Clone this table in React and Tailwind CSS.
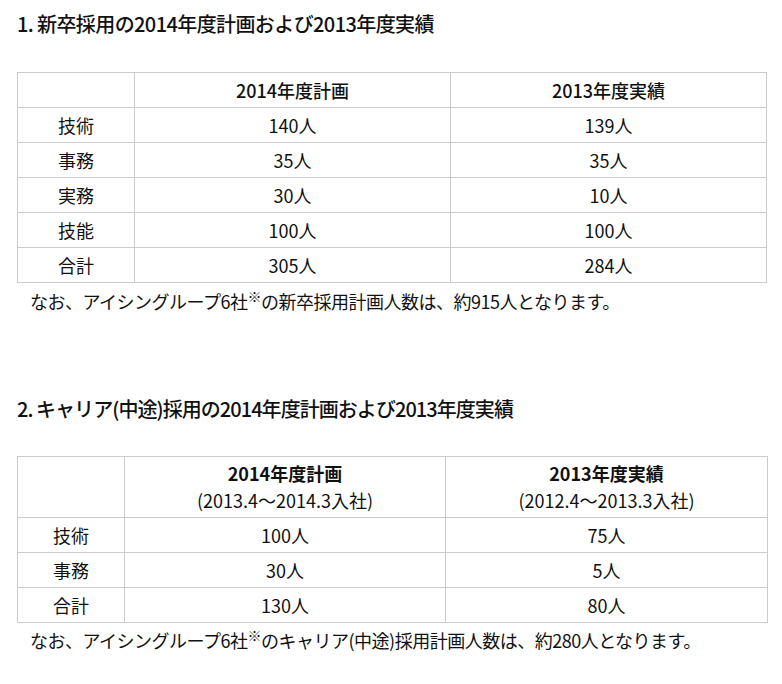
import React from "react";

const font = { fontFamily: '"Noto Sans CJK JP", "Noto Sans", sans-serif' };

function Table1() {
  const rows = [
    ["技術", "140人", "139人"],
    ["事務", "35人", "35人"],
    ["実務", "30人", "10人"],
    ["技能", "100人", "100人"],
    ["合計", "305人", "284人"],
  ];
  return (
    <table className="mt-[34px] w-[749px] border-collapse table-fixed text-[18px] text-[#111]">
      <colgroup>
        <col className="w-[117px]" />
        <col className="w-[316px]" />
        <col className="w-[316px]" />
      </colgroup>
      <thead>
        <tr className="h-[35px]">
          <th className="border border-[#cccccc] p-0 font-normal"></th>
          <th className="border border-[#cccccc] p-0 font-medium text-center">2014年度計画</th>
          <th className="border border-[#cccccc] p-0 font-medium text-center">2013年度実績</th>
        </tr>
      </thead>
      <tbody>
        {rows.map((r) => (
          <tr key={r[0]} className="h-[35px]">
            {r.map((c, i) => (
              <td key={i} className="border border-[#cccccc] p-0 text-center leading-[34px]">
                {c}
              </td>
            ))}
          </tr>
        ))}
      </tbody>
    </table>
  );
}

function Table2() {
  const rows = [
    ["技術", "100人", "75人"],
    ["事務", "30人", "5人"],
    ["合計", "130人", "80人"],
  ];
  return (
    <table className="mt-[33px] w-[750px] border-collapse table-fixed text-[18px] text-[#111]">
      <colgroup>
        <col className="w-[107px]" />
        <col className="w-[321px]" />
        <col className="w-[322px]" />
      </colgroup>
      <thead>
        <tr className="h-[61px]">
          <th className="border border-[#cccccc] p-0 font-normal"></th>
          <th className="border border-[#cccccc] p-0 text-center font-normal leading-[27px]">
            <div className="font-bold">2014年度計画</div>
            <div>(2013.4～2014.3入社)</div>
          </th>
          <th className="border border-[#cccccc] p-0 text-center font-normal leading-[27px]">
            <div className="font-bold">2013年度実績</div>
            <div>(2012.4～2013.3入社)</div>
          </th>
        </tr>
      </thead>
      <tbody>
        {rows.map((r) => (
          <tr key={r[0]} className="h-[35px]">
            {r.map((c, i) => (
              <td key={i} className="border border-[#cccccc] p-0 text-center leading-[34px]">
                {c}
              </td>
            ))}
          </tr>
        ))}
      </tbody>
    </table>
  );
}

function Mark() {
  return <span className="relative -top-[7px] text-[14px] leading-none">※</span>;
}

export default function App() {
  return (
    <div className="min-h-[684px] w-[782px] bg-white pl-[17px] pt-[10px] text-[#111]" style={font}>
      <h2 className="text-[20px] font-medium leading-[28px] tracking-[-0.6px]">1. 新卒採用の2014年度計画および2013年度実績</h2>
      <Table1 />
      <p className="h-[36px] pl-[13px] text-[18px] leading-[36px] tracking-[-0.5px]">
        なお、アイシングループ6社<Mark />の新卒採用計画人数は、約915人となります。
      </p>
      <h2 className="mt-[76px] text-[20px] font-medium leading-[28px] tracking-[-0.95px]">2. キャリア(中途)採用の2014年度計画および2013年度実績</h2>
      <Table2 />
      <p className="h-[34px] pl-[13px] text-[18px] leading-[34px] tracking-[-0.5px]">
        なお、アイシングループ6社<Mark />のキャリア(中途)採用計画人数は、約280人となります。
      </p>
    </div>
  );
}
